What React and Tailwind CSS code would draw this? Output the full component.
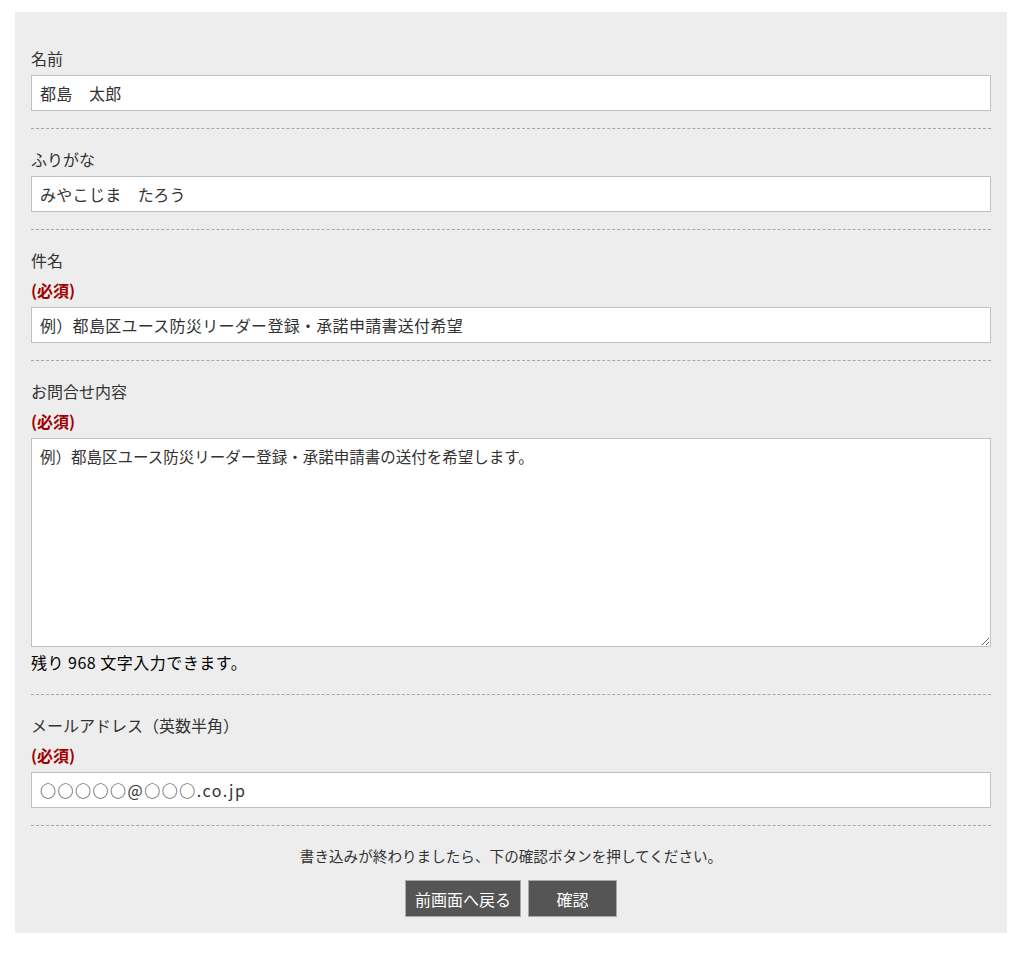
import React from 'react';

const font = { fontFamily: '"Noto Sans CJK JP", "Noto Sans", sans-serif' };

function Label({ text, required }) {
  return (
    <div>
      <div className="h-[30px] leading-[30px] text-[16px] text-[#333]">{text}</div>
      {required ? (
        <div className="h-[30px] leading-[30px] text-[16px] font-bold text-[#a10000]">(必須)</div>
      ) : null}
    </div>
  );
}

function TextInput({ value, wide }) {
  return (
    <input
      type="text"
      defaultValue={value}
      className={
        wide
          ? 'mt-[2px] block w-full h-[36px] border border-[#c0c0c0] bg-white px-[8px] text-[16px] tracking-[1.5px] text-[#333] outline-none'
          : 'mt-[2px] block w-full h-[36px] border border-[#c0c0c0] bg-white px-[8px] text-[16px] tracking-[0.3px] text-[#333] outline-none'
      }
      style={font}
    />
  );
}

function Section({ children }) {
  return <div className="pt-[15px] pb-[17px] border-b border-dashed border-[#a8a8a8]">{children}</div>;
}

export default function App() {
  return (
    <div className="min-h-screen bg-white pt-[12px] pl-[15px]" style={font}>
      <div className="w-[992px] bg-[#ededed] px-[16px] pt-[16px] pb-[16px]">
        <Section>
          <Label text="名前" />
          <TextInput value="都島　太郎" />
        </Section>
        <Section>
          <Label text="ふりがな" />
          <TextInput value="みやこじま　たろう" />
        </Section>
        <Section>
          <Label text="件名" required />
          <TextInput value="例）都島区ユース防災リーダー登録・承諾申請書送付希望" />
        </Section>
        <Section>
          <Label text="お問合せ内容" required />
          <textarea
            defaultValue="例）都島区ユース防災リーダー登録・承諾申請書の送付を希望します。"
            className="mt-[2px] block w-full h-[209px] border border-[#c0c0c0] bg-white px-[8px] py-[6px] text-[15.5px] leading-[22px] text-[#333] outline-none"
            style={font}
          />
          <div className="h-[30px] leading-[30px] text-[16px] tracking-[0.5px] text-black">残り 968 文字入力できます。</div>
        </Section>
        <Section>
          <Label text="メールアドレス（英数半角）" required />
          <TextInput value="○○○○○@○○○.co.jp" wide />
        </Section>
        <div className="pt-[15px] flex flex-col items-center">
          <div className="h-[30px] leading-[30px] text-[14.6px] text-[#333]">書き込みが終わりましたら、下の確認ボタンを押してください。</div>
          <div className="mt-[9px] flex gap-[7px]">
            <button className="h-[37px] w-[116px] bg-[#555] border border-[#aaa] text-white text-[16px]">前画面へ戻る</button>
            <button className="h-[37px] w-[89px] bg-[#555] border border-[#aaa] text-white text-[16px]">確認</button>
          </div>
        </div>
      </div>
    </div>
  );
}
